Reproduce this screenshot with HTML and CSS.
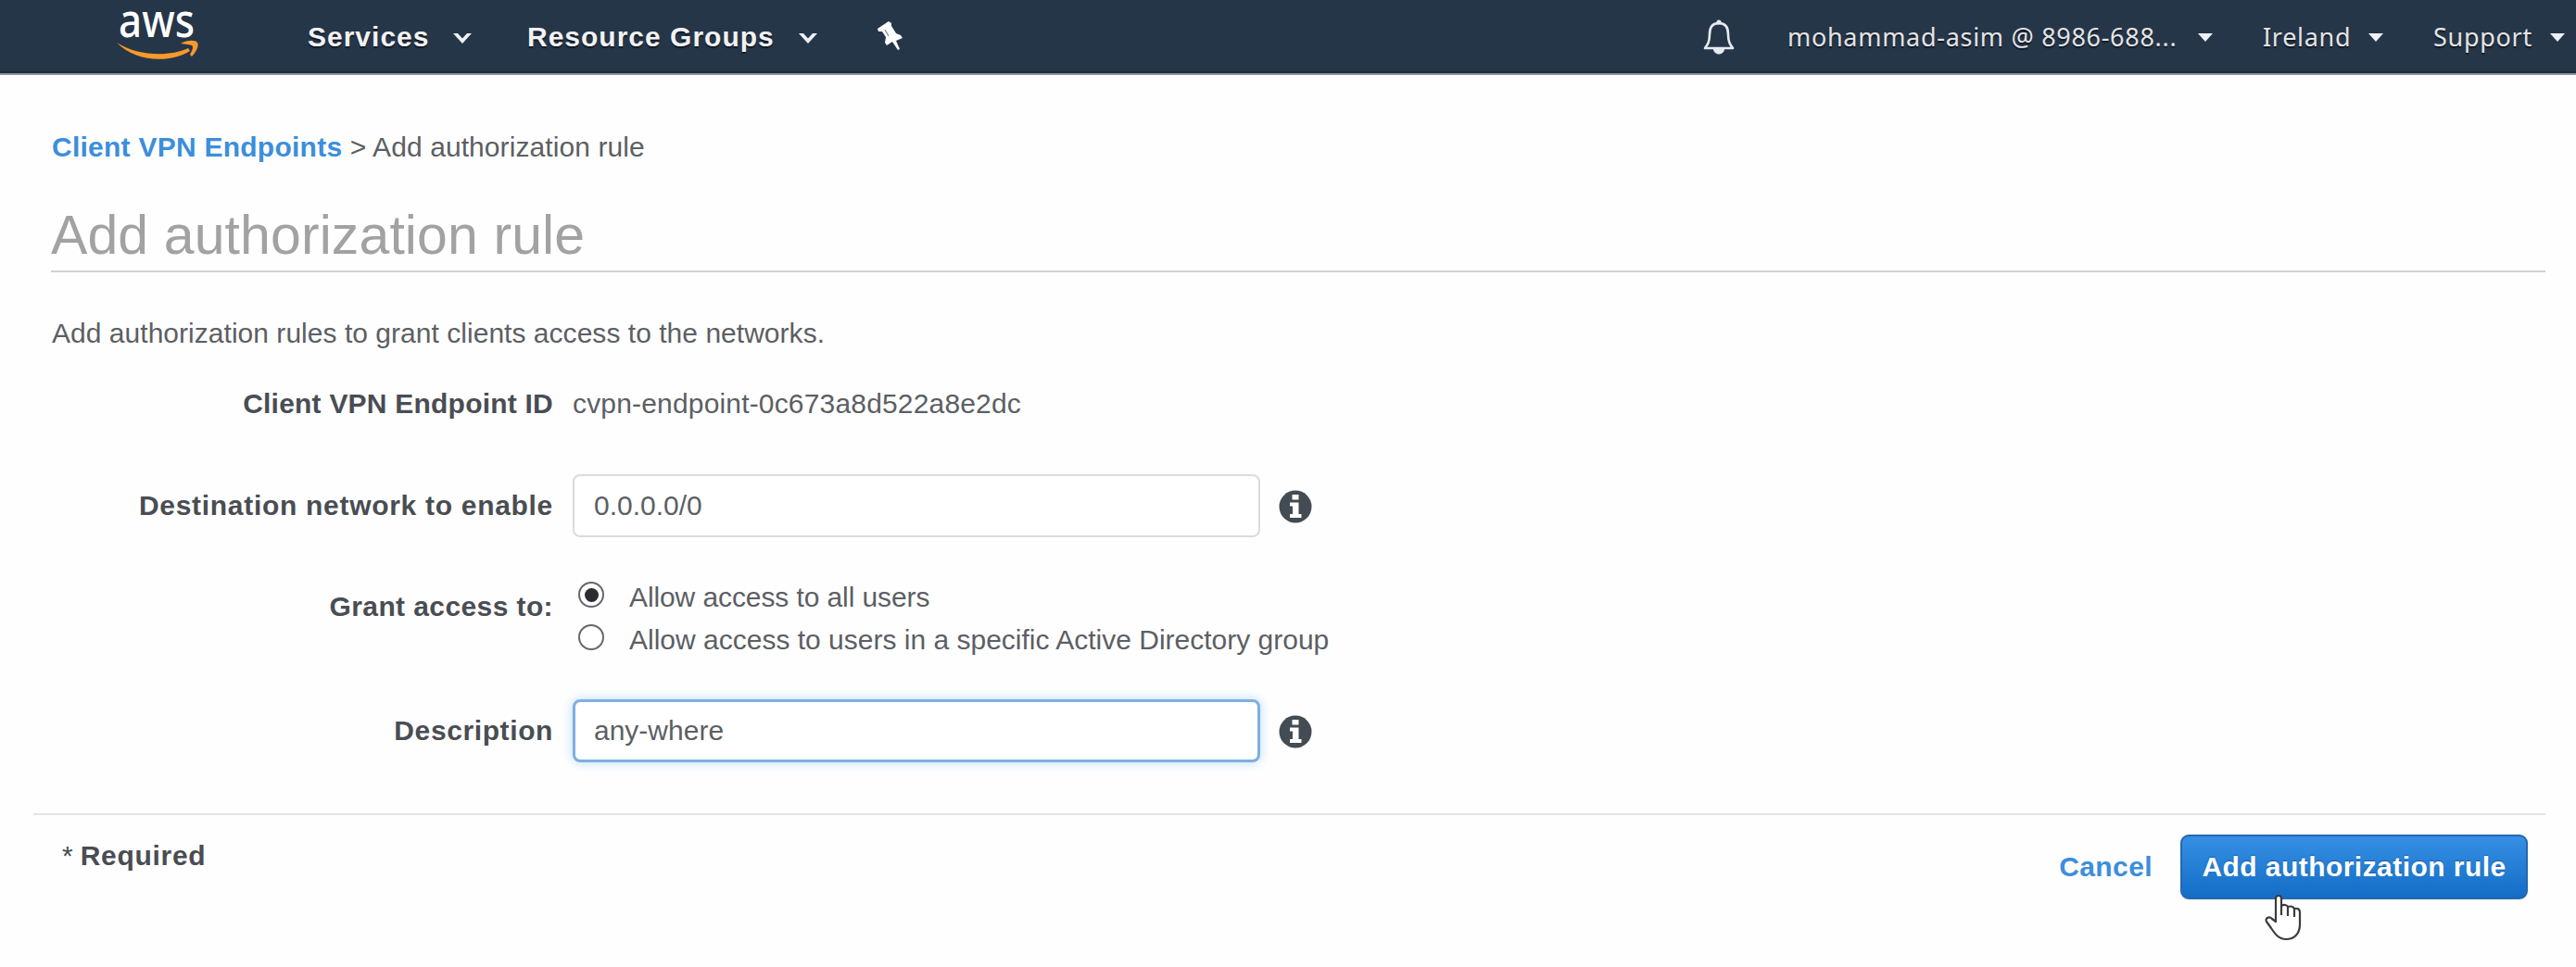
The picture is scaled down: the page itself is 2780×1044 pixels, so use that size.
FILE: index.html
```
<!DOCTYPE html>
<html lang="en">
<head>
<meta charset="utf-8">
<title>Add authorization rule</title>
<link rel="stylesheet" href="styles.css">
</head>
<body>
<header class="topbar">
  <a class="logo">
    <svg width="96" height="78" viewBox="0 0 96 78">
      <text class="logo-text" x="5" y="39" textLength="82" lengthAdjust="spacingAndGlyphs">aws</text>
      <path d="M3 45 C24 59 59 61 80 51 L82 54 C62 67 24 67 3 45Z" fill="#f79a2b"/>
      <path d="M72 46 C79 42 88 42 90 45 C92 48 89 55 84 60 L82 58 C85 52 86 50 84 48 C82 47 78 47 72 46Z" fill="#f79a2b"/>
    </svg>
  </a>
  <nav class="menu">
    <a class="menu-item services">Services</a>
    <svg class="chev" width="20" height="12" viewBox="0 0 20 12"><path d="M0 1 L5 1 L10 6.5 L15 1 L20 1 L10 12Z"/></svg>
    <a class="menu-item groups">Resource Groups</a>
    <svg class="chev" width="20" height="12" viewBox="0 0 20 12"><path d="M0 1 L5 1 L10 6.5 L15 1 L20 1 L10 12Z"/></svg>
    <svg class="pin" width="27" height="32" viewBox="0 0 27 32"><path d="M12 1 L15 3 L15 6 L20 14 L25 16 L27 19 L20 22 L24 31 L22 32 L16 23 L10 27 L8 24 L9 18 L5 12 L1 12 L0 9Z"/><path d="M8 10 L12 17" stroke="#8d96a0" stroke-width="1.5"/></svg>
  </nav>
  <div class="account">
    <svg class="bell" width="36" height="40" viewBox="0 0 36 40"><path d="M18 5 C10 5 8 10 8 17 C8 25 6 28 3 32 L33 32 C30 28 28 25 28 17 C28 10 26 5 18 5Z" fill="none" stroke="#e6ebf0" stroke-width="2.6" stroke-linejoin="round"/><circle cx="18" cy="4" r="2.6" fill="#e6ebf0"/><path d="M12 33 H24 C24 36 21 38.500 18 38.500 S12 36 12 33Z" fill="#e6ebf0"/></svg>
    <a class="user">mohammad-asim @ 8986-688...</a>
    <svg class="tri" width="16" height="10" viewBox="0 0 16 10"><path d="M0 1 L16 1 L8 10Z"/></svg>
    <a class="region">Ireland</a>
    <svg class="tri" width="16" height="10" viewBox="0 0 16 10"><path d="M0 1 L16 1 L8 10Z"/></svg>
    <a class="support">Support</a>
    <svg class="tri" width="16" height="10" viewBox="0 0 16 10"><path d="M0 1 L16 1 L8 10Z"/></svg>
  </div>
</header>
<main class="page">
  <div class="crumbs"><a class="crumb-link">Client VPN Endpoints</a> &gt; Add authorization rule</div>
  <h1 class="title">Add authorization rule</h1>
  <p class="intro">Add authorization rules to grant clients access to the networks.</p>
  <form class="form">
    <div class="row row-id">
      <span class="label label-id">Client VPN Endpoint ID</span>
      <span class="value">cvpn-endpoint-0c673a8d522a8e2dc</span>
    </div>
    <div class="row row-network">
      <label class="label label-network" for="net">Destination network to enable</label>
      <input class="field" id="net" type="text" value="0.0.0.0/0">
      <svg class="info" width="36" height="36" viewBox="0 0 36 36"><circle cx="18" cy="18" r="17.500" fill="#434b53"/><path d="M14.500 5 H21.500 V10.500 H14.500Z M12 13.500 H21.500 V26 H24.500 V30 H12 V26 H15 V17.500 H12Z" fill="#fff"/></svg>
    </div>
    <div class="row row-access">
      <span class="label label-access">Grant access to:</span>
      <div class="choices">
        <label class="choice"><span class="radio checked"></span><span class="choice-all">Allow access to all users</span></label>
        <label class="choice"><span class="radio"></span><span>Allow access to users in a specific Active Directory group</span></label>
      </div>
    </div>
    <div class="row row-desc">
      <label class="label label-desc" for="desc">Description</label>
      <input class="field focused" id="desc" type="text" value="any-where">
      <svg class="info" width="36" height="36" viewBox="0 0 36 36"><circle cx="18" cy="18" r="17.500" fill="#434b53"/><path d="M14.500 5 H21.500 V10.500 H14.500Z M12 13.500 H21.500 V26 H24.500 V30 H12 V26 H15 V17.500 H12Z" fill="#fff"/></svg>
    </div>
  </form>
  <footer class="actions">
    <span class="required"><span class="star">*</span>Required</span>
    <div class="buttons">
      <a class="cancel">Cancel</a>
      <button class="submit" type="button">Add authorization rule</button>
    </div>
  </footer>
</main>
<svg class="pointer" width="42" height="52" viewBox="0 0 42 52"><path d="M13 30 V5 C13 1 19 1 19 5 V13 C22 11 25 12 26 14 C29 13 32 14 33 16 C37 15 39 17 39 20 V33 C39 43 33 49 24 49 C16 49 12 43 8 37 L3 30 C1 26 6 24 9 27Z" fill="#fff" stroke="#3c3c3c" stroke-width="2.200" stroke-linejoin="round"/><path d="M19 12 V23 M26 14 V24 M33 16 V25" fill="none" stroke="#3c3c3c" stroke-width="2.200"/></svg>
</body>
</html>
```
FILE: styles.css
```
* { box-sizing: border-box; }

body {
  margin: 0;
  height: 1044px;
  overflow: hidden;
  background: #fefefe;
  color: #5c5f64;
  font: 30px/34px "Liberation Sans", Arial, sans-serif;
}

svg { display: block; flex: none; }

/* Top navigation */
.topbar {
  display: flex;
  align-items: center;
  justify-content: space-between;
  height: 81px;
  padding-right: 12px;
  padding-left: 123px;
  background: #263649;
  border-bottom: 2px solid #8c949e;
  box-shadow: inset 0 -2px 0 #1f2b3b;
  white-space: nowrap;
}

.logo-text {
  fill: #fff;
  font: 500 50px "Noto Sans", sans-serif;
}

.menu, .account { display: flex; align-items: center; }

.menu { flex: 1; margin-left: 113px; }

.menu-item {
  color: #f2f2f2;
  font-weight: bold;
  letter-spacing: 1px;
  text-shadow: 0 2px 1px #111a26;
}

.services { width: 157px; }
.groups { width: 293px; margin-left: 60px; }
.chev, .tri { fill: #eef1f4; }
.chev { margin-top: 2px; }
.pin { margin-left: 65px; margin-top: -4px; fill: #fff; }

.account {
  color: #e4e4e4;
  font-family: "Noto Sans", sans-serif;
  font-size: 27px;
  letter-spacing: 0.7px;
  text-shadow: 0 2px 1px #111a26;
}

.user { width: 443px; margin-left: 56px; }
.region { width: 114px; margin-left: 54px; }
.support { width: 126px; margin-left: 54px; }

/* Page body */
.page { padding: 61px 33px 0 36px; }

.crumbs { padding-left: 20px; letter-spacing: 0.08px; }

.crumb-link {
  color: #3c8edc;
  font-weight: bold;
  letter-spacing: 0.25px;
}

.title {
  margin: 44px 0 0 19px;
  padding-bottom: 4px;
  border-bottom: 2px solid #d2d2d2;
  color: #a2a2a2;
  font-size: 59px;
  font-weight: normal;
  letter-spacing: 0.1px;
  line-height: 68px;
}

.intro { margin: 49px 0 0 20px; letter-spacing: 0.03px; }

.row { display: flex; align-items: center; }
.row-id { margin-top: 42px; }
.row-network { margin-top: 59px; }
.row-access { align-items: flex-start; margin-top: 48px; }
.row-desc { margin-top: 47px; }

.label {
  width: 561px;
  margin-right: 21px;
  color: #494d53;
  font-weight: bold;
  text-align: right;
}

.label-id { letter-spacing: 0.22px; }
.label-network { letter-spacing: 0.7px; }
.label-access { margin-top: 10px; letter-spacing: 0.4px; }
.label-desc { letter-spacing: 0.6px; }
.value { letter-spacing: 0.17px; }

.field {
  width: 742px;
  height: 68px;
  margin: 0;
  padding: 0 21px;
  border: 2px solid #dcdada;
  border-radius: 8px;
  background: #fff;
  color: #5c5f64;
  font: inherit;
  outline: none;
}

.focused {
  border: 3px solid #80aedf;
  padding: 0 20px;
  box-shadow: 0 0 12px #b5dcfb;
}

.info { margin-top: 1px; margin-left: 20px; }

.choices { display: grid; gap: 12px; }

.choice { display: flex; align-items: flex-start; }
.choice-all { letter-spacing: -0.1px; }

.radio {
  display: flex;
  align-items: center;
  justify-content: center;
  width: 28px;
  height: 28px;
  margin: 0 27px 0 6px;
  border: 2px solid #66686c;
  border-radius: 50%;
  background: #fff;
}

.checked::before {
  width: 15px;
  height: 15px;
  border-radius: 50%;
  background: #2b2d30;
  content: "";
}

/* Footer actions */
.actions {
  display: flex;
  align-items: flex-start;
  justify-content: space-between;
  margin-top: 55px;
  padding: 21px 19px 0 31px;
  border-top: 2px solid #e2e2e2;
}

.required {
  margin-top: 6px;
  color: #494d53;
  font-weight: bold;
  letter-spacing: 0.7px;
}

.star { margin-right: 8px; font-weight: normal; letter-spacing: 0; }

.buttons { display: flex; align-items: center; gap: 30px; }

.cancel { color: #3c8edc; font-weight: bold; letter-spacing: 0.4px; }

.submit {
  width: 375px;
  height: 70px;
  padding: 0;
  border: 2px solid #2668ad;
  border-radius: 9px;
  background: linear-gradient(#3590e5, #146dc5);
  color: #fff;
  font: bold 30px/34px "Liberation Sans", Arial, sans-serif;
  letter-spacing: 0.45px;
  text-shadow: 0 -1px 1px #1c5fa5;
  white-space: nowrap;
}

/* Mouse pointer resting over the submit button */
.pointer { position: absolute; top: 965px; left: 2443px; }
```
